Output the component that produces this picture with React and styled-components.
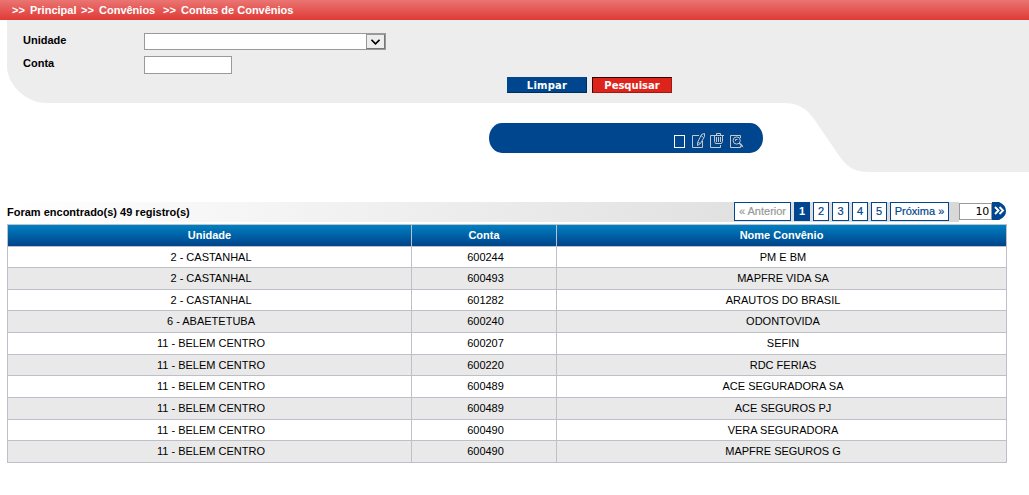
import React from "react";
import styled, { createGlobalStyle } from "styled-components";

const Global = createGlobalStyle`
  * { box-sizing: border-box; }
  body { margin: 0; background: #fff; font: 11px/13px "Liberation Sans", Arial, sans-serif; color: #000; }
  button, input { font-family: inherit; }
`;
const Page = styled.div`width: 1029px; height: 495px; overflow: hidden;`;
const Breadcrumb = styled.nav`
  height: 20px; padding-left: 12px; display: flex; align-items: center;
  background: linear-gradient(#ea7572, #e03a36); color: #fff; font-weight: bold; white-space: pre;
`;
const Crumb = styled.span`width: ${(p) => p.$w}px;`;
const Panel = styled.section`
  margin-left: 7px; height: 152px; padding: 13px 0 0 16px; background: #ededed;
  clip-path: path("M0 0 H1022 V152 H863 C848 152 841 148 833 137 L807 99 C799 88 791 83 777 83 H40 C18 83 0 64 0 46 Z");
`;
const Field = styled.div`display: flex; height: ${(p) => p.$h}px; align-items: flex-start;`;
const Label = styled.label`width: 121px; padding-top: 1px; font-weight: bold;`;
const Select = styled.div`
  width: 242px; height: 17px; border: 1px solid #999; background: #fff; display: flex; justify-content: flex-end;
`;
const Arrow = styled.button`
  width: 19px; height: 15px; padding: 0; border: 1px solid; border-color: #999 #777 #777 #999; background: #ededed;
  display: flex; align-items: center; justify-content: center;
`;
const Input = styled.input`width: 88px; height: 18px; border: 1px solid #999; background: #fff; padding: 0; margin: 0;`;
const Buttons = styled.div`display: flex; gap: 5px; padding-left: 484px;`;
const Button = styled.button`
  width: 80px; height: 16px; padding: 1px 0 0; border: 1px solid; color: #fff;
  font: bold 10px/13px "DejaVu Sans", Verdana, sans-serif; letter-spacing: ${(p) => p.$ls}px;
  background: ${(p) => (p.$red ? "#dd241c" : "#00468e")};
  border-color: ${(p) => (p.$red ? "#300 #a01a14 #a01a14 #300" : "#00468e #002c5a #002c5a #00468e")};
`;
const Toolbar = styled.div`
  margin: -49px 0 0 489px; position: relative; width: 274px; height: 30px; border-radius: 13px / 15px; background: #00468e;
  padding: 10px 19px 0 0; display: flex; justify-content: flex-end;
`;
const Results = styled.main`width: 1000px; margin: 49px 0 0 7px;`;
const Summary = styled.div`
  height: 20px; display: flex; align-items: center; background: linear-gradient(90deg, #fff, #d6d6d6);
`;
const Count = styled.div`flex: 1; font-weight: bold;`;
const Pager = styled.div`display: flex; height: 20px;`;
const PageLink = styled.span`
  width: ${(p) => p.$w}px; height: 19px; margin-right: ${(p) => p.$mr ?? 3}px; border: 1px solid #00468e; text-align: center;
  line-height: 17px; background: ${(p) => (p.$on ? "#00468e" : "#fff")};
  color: ${(p) => (p.$on ? "#fff" : p.$off ? "#999" : "#00468e")}; font-weight: ${(p) => (p.$on ? "bold" : "normal")};
  -webkit-text-stroke: ${(p) => (p.$on ? 0 : 0.2)}px;
`;
const SizeForm = styled.div`display: flex; width: 48px; height: 20px; background: #fff;`;
const Size = styled.div`
  width: 33px; height: 17px; margin-top: 1px; border: 1px solid #999; background: #fff; text-align: right; line-height: 16px;
  padding-right: 2px; font-family: "DejaVu Sans", Verdana, sans-serif; letter-spacing: -0.2px;
`;
const Table = styled.div`margin-top: 2px; border: 1px solid #bfbfc9; border-bottom: 0;`;
const Row = styled.div`
  display: grid; grid-template-columns: 403px 144px 449px; column-gap: 1px; height: ${(p) => p.$h}px;
  border-bottom: 1px solid #bfbfc9; background: #bfbfc9; text-align: center;
`;
const Cell = styled.div`background: ${(p) => (p.$alt ? "#e9e9e9" : "#fff")}; line-height: 20px; padding-left: 3px;`;
const Head = styled.div`background: linear-gradient(#0080c2, #00438a); color: #fff; font-weight: bold; line-height: 21px;`;

const rows = [
  ["2 - CASTANHAL", "600244", "PM E BM", 21],
  ["2 - CASTANHAL", "600493", "MAPFRE VIDA SA", 22],
  ["2 - CASTANHAL", "601282", "ARAUTOS DO BRASIL", 21],
  ["6 - ABAETETUBA", "600240", "ODONTOVIDA", 22],
  ["11 - BELEM CENTRO", "600207", "SEFIN", 22],
  ["11 - BELEM CENTRO", "600220", "RDC FERIAS", 21],
  ["11 - BELEM CENTRO", "600489", "ACE SEGURADORA SA", 22],
  ["11 - BELEM CENTRO", "600489", "ACE SEGUROS PJ", 22],
  ["11 - BELEM CENTRO", "600490", "VERA SEGURADORA", 21],
  ["11 - BELEM CENTRO", "600490", "MAPFRE SEGUROS G", 22],
];

const ToolIcons = () => (
  <svg width="71" height="17" viewBox="0 0 71 17" fill="none" stroke="#c8c8c8">
    <rect x="1.5" y="2.5" width="10" height="12" stroke="#fff" />
    <path d="M26 2.5H19.5V14.5H29.5V8" />
    <path d="M24.5 12.5V9.5L28.5 1.5L31.5 .5V3.5L27.5 10.5ZM28 2.5L30.5 4.5M25 9.5L27.5 10.5" />
    <path d="M40 2.5H37.5V14.5H47.5V12" />
    <path d="M40 2.5H51M43.5 2V.5H47.5V2M41.5 3V8.5L42.5 10.5H48.5L49.5 8.5V3M43.5 4V9M45.5 4V9M47.5 4V9" />
    <path d="M67.5 5V2.5H57.5V14.5H67.5V13" />
    <circle cx="63.7" cy="7.5" r="3.6" />
    <path d="M62.5 8V6.5H64.5M66 10L70 14.2" />
    <path d="M67 10.5L69.5 13.5" strokeWidth="1.6" />
  </svg>
);

export default function App() {
  return (
    <Page>
      <Global />
      <Breadcrumb>
        <Crumb $w={18}>&gt;&gt;</Crumb><Crumb $w={51}>Principal</Crumb>
        <Crumb $w={18}>&gt;&gt;</Crumb><Crumb $w={64}>Convênios</Crumb>
        <Crumb $w={18}>&gt;&gt;</Crumb><Crumb $w={130}>Contas de Convênios</Crumb>
      </Breadcrumb>
      <Panel>
        <Field $h={23}>
          <Label>Unidade</Label>
          <Select>
            <Arrow aria-label="Abrir">
              <svg width="9" height="6" viewBox="0 0 9 6" fill="none" stroke="#000" strokeWidth="1.6"><path d="M.5.8L4.5 4.8L8.5.8" /></svg>
            </Arrow>
          </Select>
        </Field>
        <Field $h={21}><Label>Conta</Label><Input aria-label="Conta" /></Field>
        <Buttons><Button $ls={0.2}>Limpar</Button><Button $red $ls={0}>Pesquisar</Button></Buttons>
      </Panel>
      <Toolbar><ToolIcons /></Toolbar>
      <Results>
        <Summary>
          <Count>Foram encontrado(s) 49 registro(s)</Count>
          <Pager>
            <PageLink $w={57} $off>« Anterior</PageLink>
            <PageLink $w={16} $on>1</PageLink>
            <PageLink $w={16}>2</PageLink>
            <PageLink $w={17}>3</PageLink>
            <PageLink $w={16}>4</PageLink>
            <PageLink $w={16}>5</PageLink>
            <PageLink $w={59} $mr={10}>Próxima »</PageLink>
          </Pager>
          <SizeForm>
            <Size>10</Size>
            <svg width="15" height="19" viewBox="0 0 15 19"><path d="M0 0H7Q14 3 14 9T7 18H0Z" fill="#00468e" /><path d="M3 5L6.5 8.5L3 12M7.5 5L11 8.5L7.5 12" fill="none" stroke="#fff" strokeWidth="1.9" /></svg>
          </SizeForm>
        </Summary>
        <Table>
          <Row $h={22}><Head>Unidade</Head><Head>Conta</Head><Head>Nome Convênio</Head></Row>
          {rows.map(([unit, account, name, h], i) => (
            <Row key={i} $h={h}>
              <Cell $alt={i % 2}>{unit}</Cell><Cell $alt={i % 2}>{account}</Cell><Cell $alt={i % 2}>{name}</Cell>
            </Row>
          ))}
        </Table>
      </Results>
    </Page>
  );
}
